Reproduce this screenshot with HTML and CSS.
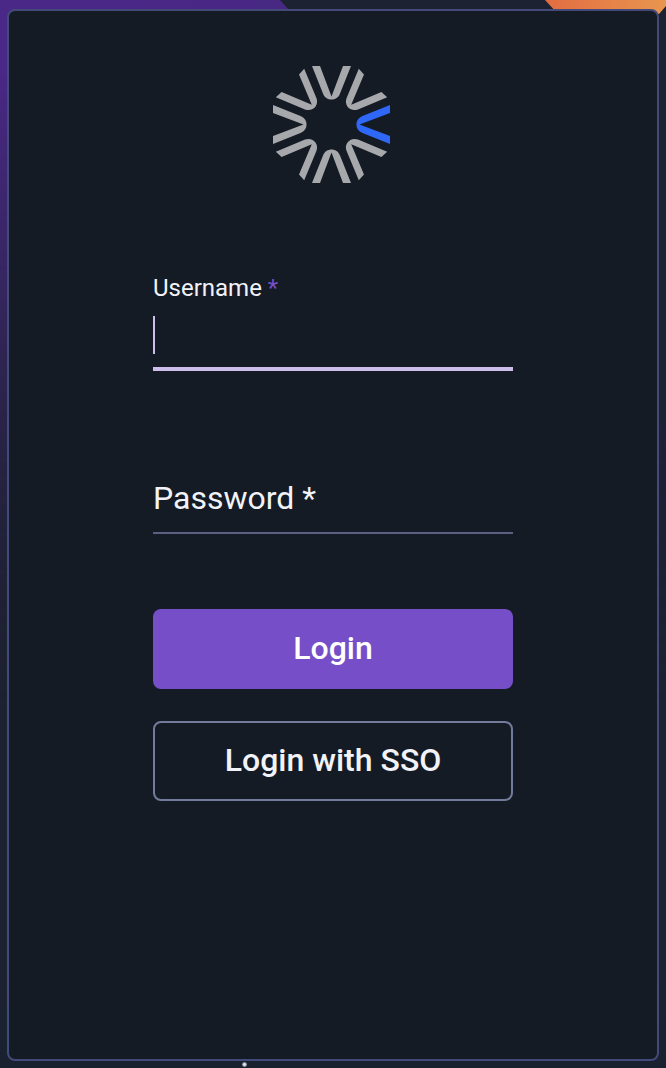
FILE: index.html
```html
<!DOCTYPE html>
<html lang="en">
<head>
<meta charset="utf-8">
<meta name="viewport" content="width=device-width, initial-scale=1">
<title>Login</title>
<link rel="stylesheet" href="styles.css">
</head>
<body class="page">
<div class="backdrop" aria-hidden="true">
  <div class="shape-purple"></div>
  <div class="shape-orange"></div>
  <div class="star"></div>
</div>
<main class="card">
  <svg class="logo" viewBox="0 0 117 117" role="img" aria-label="Logo">
    <defs>
      <path id="ray" d="M39 0H47L58.5 30.5L70 0H78L67 27.5C64.2 35.6 52.8 35.6 50 27.5Z"/>
      <path id="diagonal" d="M31.2 2.8L26 8.6L38.8 38.8L8.6 26L2.8 31.2L32 43.4C39.4 46.4 46.4 39.4 43.4 32Z"/>
    </defs>
    <g fill="#a7a8ac">
      <use href="#ray"/>
      <use href="#ray" transform="rotate(180 58.5 58.5)"/>
      <use href="#ray" transform="rotate(270 58.5 58.5)"/>
      <use href="#diagonal"/>
      <use href="#diagonal" transform="rotate(90 58.5 58.5)"/>
      <use href="#diagonal" transform="rotate(180 58.5 58.5)"/>
      <use href="#diagonal" transform="rotate(270 58.5 58.5)"/>
    </g>
    <use href="#ray" fill="#2f68f6" transform="rotate(90 58.5 58.5)"/>
  </svg>
  <form class="form">
    <div class="field field-active">
      <label class="label" for="username">Username <span class="required">*</span></label>
      <div class="control">
        <input class="input" id="username" name="username" type="text" autocomplete="off" required>
        <span class="caret"></span>
      </div>
    </div>
    <div class="field field-resting">
      <label class="label" for="password">Password *</label>
      <input class="input" id="password" name="password" type="password" required>
    </div>
    <button class="button button-primary" type="submit">Login</button>
    <button class="button button-outline" type="button">Login with SSO</button>
  </form>
</main>
</body>
</html>
```
FILE: styles.css
```css
* {
  box-sizing: border-box;
}

.page {
  display: flex;
  min-height: 100vh;
  margin: 0;
  padding: 9px 7px 7px;
  background: #1c2231;
  color: #f1f3f9;
  font-family: Roboto, "Liberation Sans", sans-serif;
}

.backdrop {
  position: fixed;
  inset: 0;
  z-index: -1;
  overflow: hidden;
  background: linear-gradient(#1c2231 90%, #192130);
}

.shape-purple {
  position: absolute;
  top: 0;
  left: 0;
  width: 700px;
  height: 700px;
  background: linear-gradient(155deg, #4a2888 5%, #432878 28%, #271f3d 70%, #1c2231 90%);
  clip-path: polygon(0 0, 280px 0, 700px 468px, 700px 700px, 0 700px);
  mask-image: linear-gradient(#000 10%, transparent);
}

.shape-orange {
  position: absolute;
  top: 0;
  right: 0;
  width: 121px;
  height: 14px;
  background: linear-gradient(100deg, #e26c42, #e9964f);
  clip-path: polygon(0 0, 100% 0, 100% 6px, 114px 14px, 13px 14px);
}

.star {
  position: absolute;
  bottom: 1px;
  left: 242px;
  width: 5px;
  height: 5px;
  border-radius: 50%;
  background: radial-gradient(#e8e8ee 20%, #8b8e9a 60%, transparent);
}

.card {
  display: flex;
  flex: 1;
  flex-direction: column;
  align-items: center;
  padding: 55px 24px;
  border: 2px solid #434a79;
  border-radius: 8px;
  background: #151b24;
}

.logo {
  flex: none;
  width: 117px;
  height: 117px;
  margin-right: 3px;
}

.form {
  display: flex;
  flex-direction: column;
  width: 100%;
  max-width: 360px;
  margin-top: 89px;
}

.field {
  position: relative;
  display: flex;
  flex-direction: column;
}

.label {
  font-size: 24px;
  line-height: 32px;
}

.required {
  color: #764fc9;
}

.control {
  position: relative;
  display: flex;
}

.input {
  width: 100%;
  height: 64px;
  padding: 0;
  border: 0;
  border-bottom: 2px solid #596080;
  border-radius: 0;
  outline: 0;
  background: transparent;
  color: inherit;
  font: inherit;
  font-size: 32px;
}

.field-active .input {
  height: 67px;
  border-bottom: 4px solid #cebeeb;
  caret-color: transparent;
}

.caret {
  position: absolute;
  top: 12px;
  left: 0;
  width: 2px;
  height: 38px;
  background: #cebeeb;
  pointer-events: none;
}

.field-resting {
  margin: 99px 0 75px;
}

.field-resting .label {
  position: absolute;
  top: 8px;
  left: 0;
  font-size: 32px;
  line-height: 40px;
}

.button {
  height: 80px;
  padding: 0 16px 2px;
  border: 0;
  border-radius: 8px;
  color: #f1f3f9;
  font: inherit;
  font-size: 32px;
  font-weight: 500;
  cursor: pointer;
}

.button-primary {
  background: #764fc8;
  color: #fff;
}

.button-outline {
  margin-top: 32px;
  border: 2px solid #737b9c;
  background: transparent;
}
```
